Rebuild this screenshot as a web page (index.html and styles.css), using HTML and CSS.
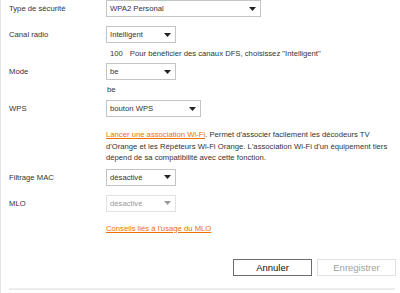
FILE: index.html
```html
<!DOCTYPE html>
<html lang="fr">
<head>
<meta charset="utf-8">
<link rel="stylesheet" href="styles.css">
</head>
<body>
<div class="page">
  <div class="form">
    <div class="row r1">
      <div class="label">Type de sécurité</div>
      <div class="ctrl">
        <div class="select w-lg"><span>WPA2 Personal</span><svg class="arrow" width="7" height="4" viewBox="0 0 7 4"><path d="M0 0H7L3.5 4Z"/></svg></div>
      </div>
    </div>
    <div class="row r2">
      <div class="label">Canal radio</div>
      <div class="ctrl">
        <div class="select w-sm"><span>Intelligent</span><svg class="arrow" width="7" height="4" viewBox="0 0 7 4"><path d="M0 0H7L3.5 4Z"/></svg></div>
        <div class="hint"><span class="num">100</span><span>Pour bénéficier des canaux DFS, choisissez "Intelligent"</span></div>
      </div>
    </div>
    <div class="row r3">
      <div class="label">Mode</div>
      <div class="ctrl">
        <div class="select w-sm"><span>be</span><svg class="arrow" width="7" height="4" viewBox="0 0 7 4"><path d="M0 0H7L3.5 4Z"/></svg></div>
        <div class="value">be</div>
      </div>
    </div>
    <div class="row r4">
      <div class="label">WPS</div>
      <div class="ctrl">
        <div class="select w-md"><span>bouton WPS</span><svg class="arrow" width="7" height="4" viewBox="0 0 7 4"><path d="M0 0H7L3.5 4Z"/></svg></div>
        <p class="desc"><a class="link" href="#">Lancer une association Wi-Fi</a>. Permet d'associer facilement les décodeurs TV d'Orange et les Répéteurs Wi-Fi Orange. L'association Wi-Fi d'un équipement tiers dépend de sa compatibilité avec cette fonction.</p>
      </div>
    </div>
    <div class="row r5">
      <div class="label">Filtrage MAC</div>
      <div class="ctrl">
        <div class="select w-sm"><span>désactivé</span><svg class="arrow" width="7" height="4" viewBox="0 0 7 4"><path d="M0 0H7L3.5 4Z"/></svg></div>
      </div>
    </div>
    <div class="row r6">
      <div class="label">MLO</div>
      <div class="ctrl">
        <div class="select w-sm disabled"><span>désactivé</span><svg class="arrow" width="7" height="4" viewBox="0 0 7 4"><path d="M0 0H7L3.5 4Z"/></svg></div>
        <a class="link tips" href="#">Conseils liés à l'usage du MLO</a>
      </div>
    </div>
  </div>
  <div class="actions">
    <button class="btn btn-cancel">Annuler</button>
    <button class="btn btn-save" disabled>Enregistrer</button>
  </div>
  <div class="divider"></div>
</div>
</body>
</html>
```

FILE: styles.css
```css
html, body {
  margin: 0;
  padding: 0;
  background: #fff;
}
body {
  width: 400px;
  height: 293px;
  overflow: hidden;
  font-family: "Liberation Sans", Arial, sans-serif;
  font-size: 7.7px;
  color: #333;
}
.page {
  height: 293px;
  border-left: 1px solid #e3e3e3;
  box-sizing: border-box;
  padding: 0 4px 0 8px;
}
.form {
  display: flex;
  flex-direction: column;
}
.row {
  display: grid;
  grid-template-columns: 97px 1fr;
  align-items: start;
}
.r2 { margin-top: 9px; }
.r3 { margin-top: 4px; }
.r4 { margin-top: 5px; }
.r5 { margin-top: 5px; }
.r6 { margin-top: 9px; }
.label {
  height: 17px;
  line-height: 17px;
  white-space: nowrap;
}
.ctrl {
  display: flex;
  flex-direction: column;
  align-items: flex-start;
}
.select {
  box-sizing: border-box;
  height: 17px;
  border: 1px solid #c4c4c4;
  display: flex;
  align-items: center;
  justify-content: space-between;
  padding: 0 4px 0 3px;
  background: #fff;
  color: #333;
  white-space: nowrap;
}
.select .arrow {
  fill: #222;
  flex: none;
}
.select.disabled {
  border-color: #e2e2e2;
  color: #9a9a9a;
}
.select.disabled .arrow {
  fill: #9a9a9a;
}
.w-lg { width: 155px; }
.w-md { width: 95px; }
.w-sm { width: 70px; }
.hint {
  margin-top: 5px;
  height: 11px;
  line-height: 11px;
  padding-left: 4px;
  white-space: nowrap;
}
.hint .num {
  margin-right: 7px;
}
.value {
  margin-top: 4px;
  height: 11px;
  line-height: 11px;
  padding-left: 1px;
}
.desc {
  margin: 12px 0 0 0;
  width: 290px;
  line-height: 11.5px;
}
.link {
  color: #f16e00;
  text-decoration: underline;
}
.tips {
  margin-top: 11px;
  line-height: 11px;
}
.actions {
  display: flex;
  justify-content: flex-end;
  gap: 5px;
  margin-top: 25px;
}
.btn {
  box-sizing: border-box;
  width: 79px;
  height: 17px;
  padding: 0;
  font-family: "Liberation Sans", Arial, sans-serif;
  font-size: 9.5px;
  background: #fff;
  border-radius: 0;
}
.btn-cancel {
  border: 1px solid #6b6b6b;
  color: #111;
}
.btn-save {
  border: 1px solid #e0e0e0;
  color: #a0a0a0;
}
.divider {
  margin-top: 12px;
  margin-right: 1px;
  height: 2px;
  background: #ececec;
}
```
